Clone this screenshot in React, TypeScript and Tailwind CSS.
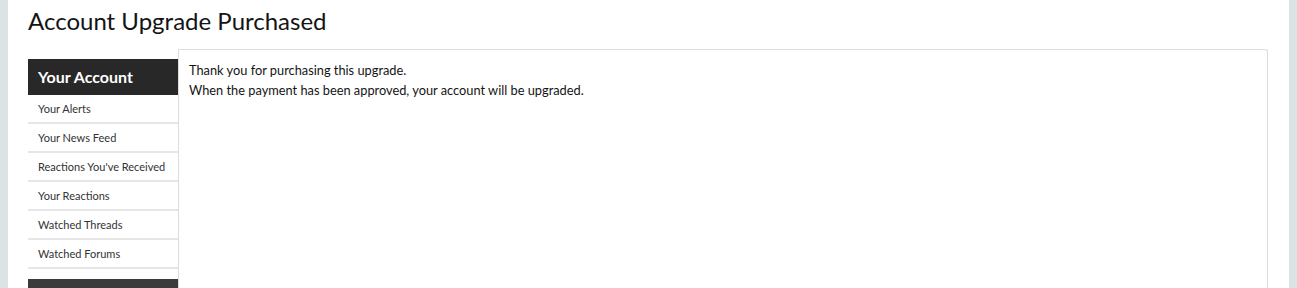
const items = [
  "Your Alerts",
  "Your News Feed",
  "Reactions You've Received",
  "Your Reactions",
  "Watched Threads",
  "Watched Forums",
];

export default function App() {
  return (
    <div className="h-[288px] w-full overflow-hidden bg-[#dce3e4] px-[8px] font-['Lato',sans-serif] text-[#141414]">
      <div className="h-full bg-white pl-[20px] pr-[21px]">
        <h1 className="pt-[5px] text-[24px] leading-[32px] text-[#141414]">Account Upgrade Purchased</h1>
        <div className="mt-[12px] flex">
          <div className="mt-[10px] w-[150px] shrink-0">
            <div className="flex h-[36px] items-center bg-[#282828] px-[10px] text-[16px] font-bold text-white">Your Account</div>
            {items.map((t) => (
              <div key={t} className="flex h-[29px] items-center border-b-2 border-[#e6e6e6] pl-[10px] pt-[1px] text-[11px] text-[#333333]">
                {t}
              </div>
            ))}
            <div className="mt-[10px] h-[20px] bg-[#3b3b3b]" />
          </div>
          <div className="h-[260px] flex-1 rounded-tr-[3px] border-l border-r border-t border-[#dddddd] px-[10px] pt-[10px] text-[12.8px] leading-[20px]">
            <p>Thank you for purchasing this upgrade.</p>
            <p>When the payment has been approved, your account will be upgraded.</p>
          </div>
        </div>
      </div>
    </div>
  );
}
